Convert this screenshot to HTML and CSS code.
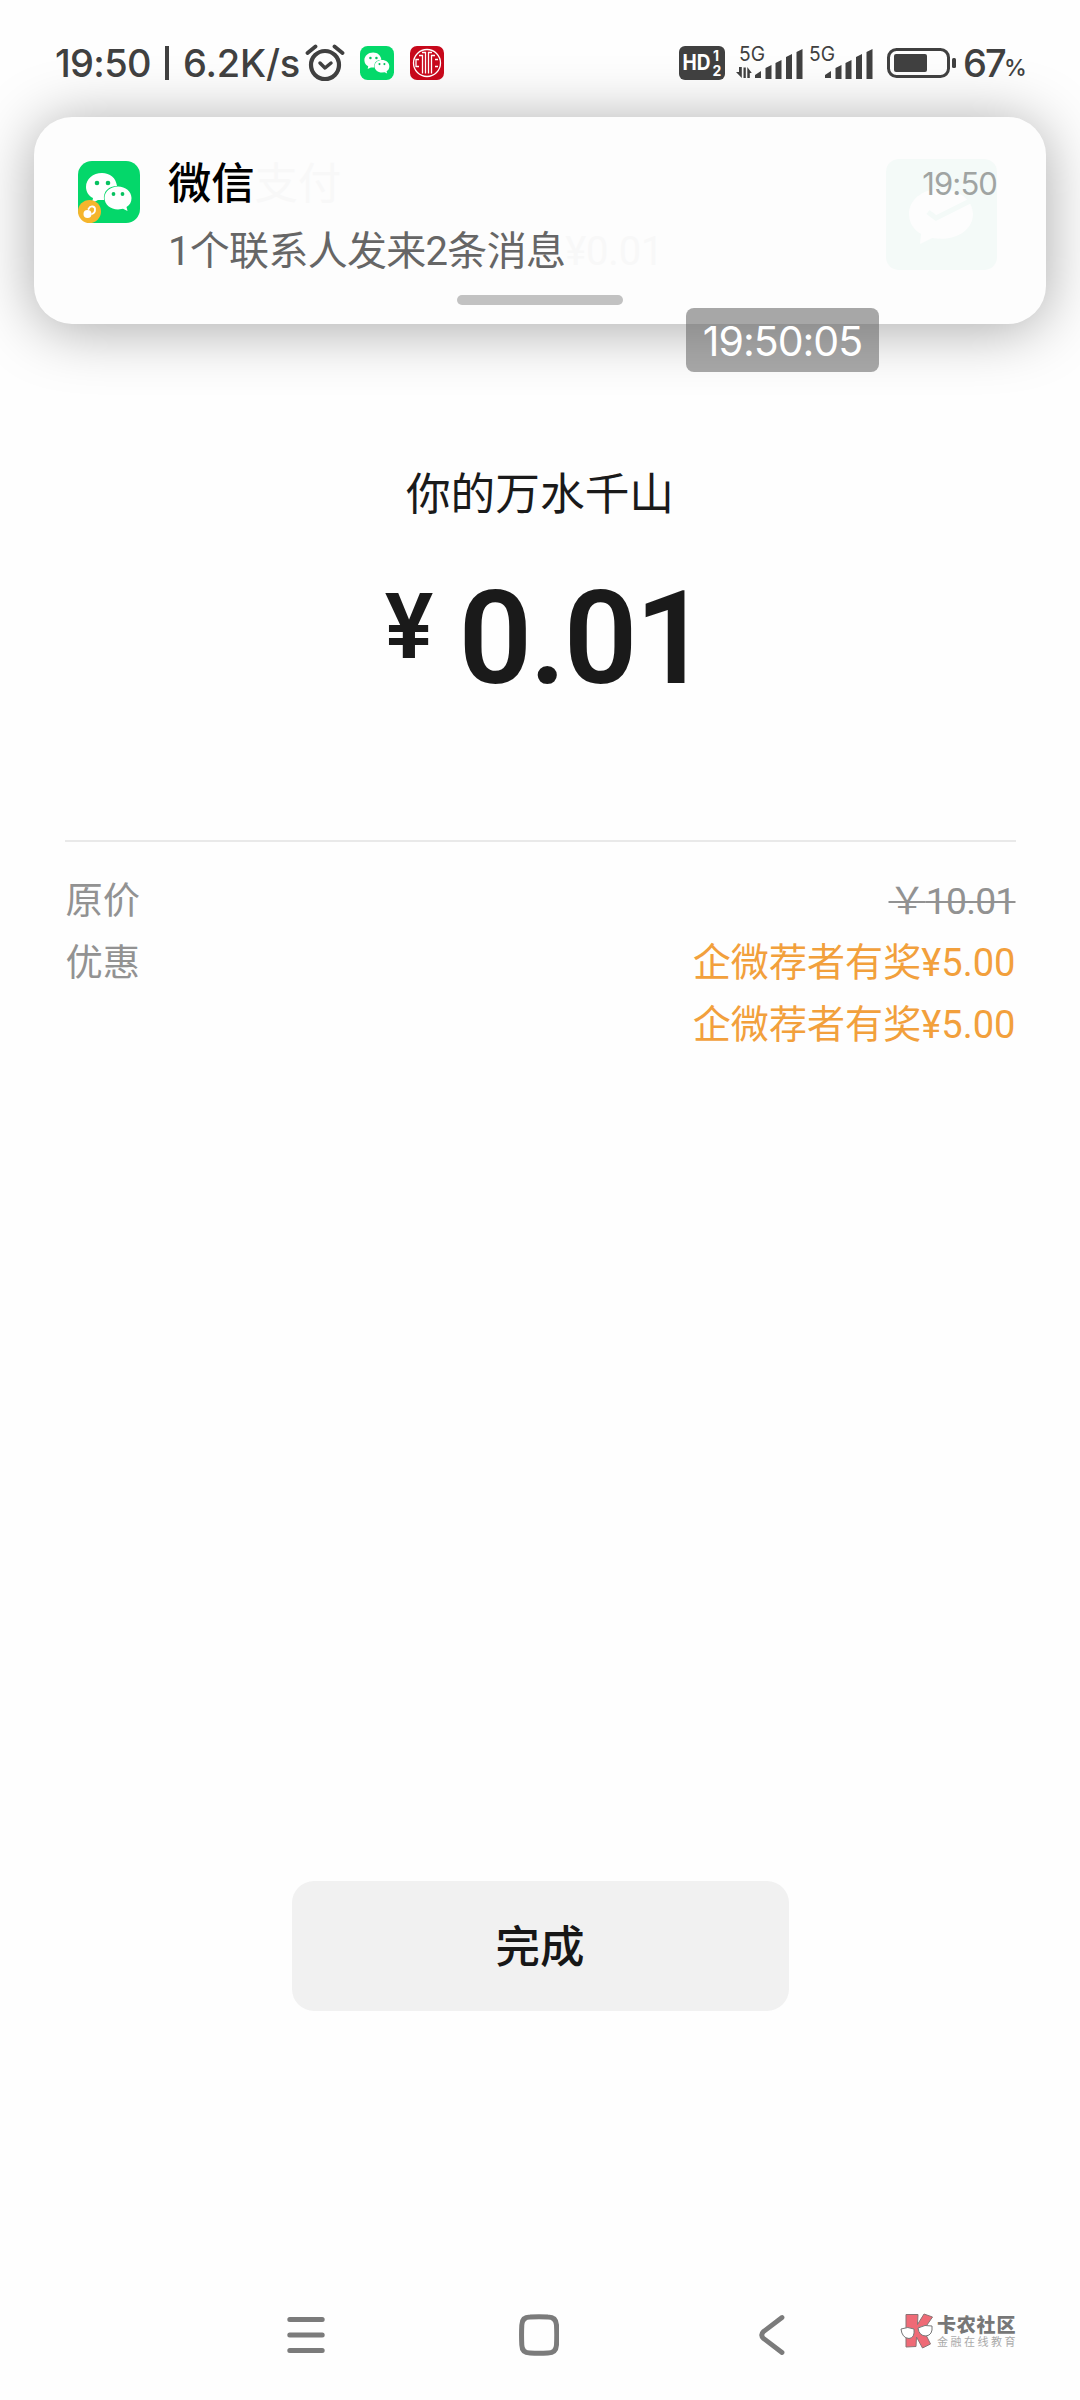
FILE: index.html
```html
<!DOCTYPE html>
<html lang="zh-CN">
<head>
<meta charset="utf-8">
<title>微信支付</title>
<link rel="stylesheet" href="styles.css">
</head>
<body>
<svg class="defs" aria-hidden="true">
  <symbol id="wechat" viewBox="0 0 62 62">
    <path fill="#fff" d="M24 12C15 12 8 18 8 26c0 5 3 9 7 11l-1 5 6-3h6c-1-9 5-14 13-14C38 17 32 12 24 12z"/>
    <path fill="#fff" d="M40 25.500c-7.500 0-13.500 5-13.500 11.500s6 11.500 13.500 11.500l5-.7 4.500 2.200-1-4C52 44 53.500 41 53.500 37c0-6.500-6-11.500-13.500-11.500z"/>
    <g fill="#07c160"><circle cx="19" cy="22" r="2.300"/><circle cx="30" cy="22" r="2.300"/><circle cx="35.500" cy="33" r="1.900"/><circle cx="44.500" cy="33" r="1.900"/></g>
  </symbol>
</svg>
<div class="screen">
  <header class="status">
    <span class="clock">19:50</span>
    <span class="bar"></span>
    <span class="speed">6.2K/s</span>
    <svg class="alarm" width="40" height="38" viewBox="0 0 40 38" fill="none" stroke="#404040">
      <circle cx="20" cy="21" r="14" stroke-width="4.200"/>
      <path d="M2.500 9l8-6.500M37.500 9l-8-6.500" stroke-width="3.800" stroke-linecap="round"/>
      <path d="M15 19l5 5 6-5" stroke-width="3.500" stroke-linecap="round" stroke-linejoin="round"/>
    </svg>
    <svg class="app-wechat" width="34" height="34" viewBox="0 0 62 62"><rect width="62" height="62" rx="14" fill="#04d96a"/><use href="#wechat"/></svg>
    <svg class="app-bank" width="34" height="34" viewBox="0 0 34 34">
      <rect width="34" height="34" rx="7" fill="#c7081b"/>
      <g fill="none" stroke="#fff" stroke-width="1.300">
        <circle cx="17" cy="17" r="13.500"/>
        <path d="M12 6.500h3.500v21M22 6.500h-3.500v21M9 9.500h3.500v18M25 9.500h-3.500v18M9 13.500H6v7h3M25 13.500h3M25 20.500h3"/>
      </g>
    </svg>
    <span class="spacer"></span>
    <svg class="hd" width="46" height="34" viewBox="0 0 46 34">
      <rect width="46" height="34" rx="6" fill="#404040"/>
      <text x="3.500" y="24" class="hd-text" textLength="28" lengthAdjust="spacingAndGlyphs">HD</text>
      <text x="34" y="15" class="hd-num">1</text><text x="33.500" y="30" class="hd-num">2</text>
    </svg>
    <svg class="signal-a" width="67" height="38" viewBox="0 -4 67 38" fill="#404040">
      <text x="3" y="15" class="net" textLength="26" lengthAdjust="spacingAndGlyphs">5G</text>
      <path d="M0 26h3v-5h2.800v11zM7.500 21.500V32H9.800V21.500zM11.300 32V21l4.500 6h-2v5z"/>
      <path d="M19 32v-3l6-4v7zM29.500 33V22l6-3V33zM39.500 33V17l6-3V33zM50 33V11l6-3V33zM60.500 33V6l6-3v30z"/>
    </svg>
    <svg class="signal-b" width="64" height="38" viewBox="3 -4 64 38" fill="#404040">
      <text x="3" y="15" class="net" textLength="26" lengthAdjust="spacingAndGlyphs">5G</text>
      <path d="M19 32v-3l6-4v7zM29.500 33V22l6-3V33zM39.500 33V17l6-3V33zM50 33V11l6-3V33zM60.500 33V6l6-3v30z"/>
    </svg>
    <svg class="battery" width="70" height="32" viewBox="0 0 70 32">
      <rect x="1.500" y="2.500" width="60" height="27" rx="8" fill="none" stroke="#404040" stroke-width="3"/>
      <rect x="7" y="7" width="33" height="18" rx="2" fill="#404040"/>
      <rect x="65" y="11" width="4" height="10" rx="1.500" fill="#404040"/>
    </svg>
    <span class="level">67</span><span class="percent">%</span>
  </header>

  <section class="notice">
    <svg class="notice-icon" width="62" height="62" viewBox="0 0 62 62">
      <rect width="62" height="62" rx="14" fill="#04d76a"/>
      <use href="#wechat"/>
      <circle cx="11.500" cy="50.500" r="11.500" fill="#f5b52c"/>
      <circle cx="9.500" cy="53" r="4" fill="#fff"/>
      <path d="M10.500 48c2-4 7-3 6.500 1 0 2-1.500 3.500-3 4" fill="none" stroke="#fff" stroke-width="1.800" stroke-linecap="round"/>
    </svg>
    <div class="notice-body">
      <div class="notice-title">微信<span class="ghost">支付</span></div>
      <div class="notice-text"><span>1个联系人发来2条消息</span><span class="ghost ghost-sum">¥0.01</span></div>
    </div>
    <div class="notice-side">
      <svg class="ghost-logo" width="111" height="111" viewBox="0 0 111 111">
        <rect width="111" height="111" rx="13" fill="#f4faf8"/>
        <path fill="#fdfdfd" d="M54 30c-18 0-31 11-31 25 0 9 5 16 12 20l-1 10 12-6c24 4 41-8 41-24 0-14-14-25-33-25z"/>
        <path d="M42 53l8 6 34-17" fill="none" stroke="#f4faf8" stroke-width="5"/>
      </svg>
      <time class="notice-time">19:50</time>
    </div>
    <span class="handle"></span>
  </section>
  <div class="stamp">19:50:05</div>

  <main class="receipt">
    <h1 class="payee">你的万水千山</h1>
    <div class="amount"><span class="yen">¥</span><span class="sum">0.01</span></div>
    <dl class="details">
      <div class="row"><dt>原价</dt><dd class="old">&#xFFE5;<span>10.01</span></dd></div>
      <div class="row"><dt>优惠</dt><dd class="promo">企微荐者有奖<span>¥5.00</span></dd></div>
      <div class="row"><dt></dt><dd class="promo">企微荐者有奖<span>¥5.00</span></dd></div>
    </dl>
    <button class="done">完成</button>
  </main>

  <footer class="nav">
    <svg class="nav-menu" width="38" height="42" viewBox="0 0 38 42" fill="none" stroke="#7b7b7b" stroke-width="5" stroke-linecap="round"><path d="M2.800 5.500h32.400M2.800 21h32.400M2.800 36.500h32.400"/></svg>
    <svg class="nav-home" width="40" height="42" viewBox="0 0 40 42" fill="none" stroke="#7b7b7b" stroke-width="5"><path d="M11 3Q20 2.500 29 3Q37 3 37.500 11Q38 21 37.500 31Q37 39 29 39Q20 39.500 11 39Q3 39 2.800 31Q2.300 21 2.800 11Q3 3 11 3z"/></svg>
    <svg class="nav-back" width="26" height="42" viewBox="0 0 26 42" fill="none" stroke="#7b7b7b" stroke-width="4.800" stroke-linecap="round"><path d="M23 3.500L4.500 17.500Q1 21 4.500 24.500L23 38.500"/></svg>
    <svg class="mark" width="34" height="36" viewBox="0 0 34 36">
      <path d="M6 1.500h12l-.5 10L24 1l8.500 3-9 13 7 14-8 4-6-11-.5 9.500-10 .5z" fill="#ef6a76" stroke="#8b7375"/>
      <path d="M1 16q7-3 13 0 1 9-5 9.500Q2 25 1 16zM18 15q7-4 14-2 1 9-6 10-7 0-8-8z" fill="#fff" stroke="#777"/>
    </svg>
    <div class="brand"><div class="brand-name">卡农社区</div><div class="brand-sub">金融在线教育</div></div>
  </footer>
</div>
</body>
</html>
```
FILE: styles.css
```css
* { box-sizing: border-box; }
body { margin: 0; background: #fefefe; font-family: Roboto, "Noto Sans CJK SC", sans-serif; }
.defs { position: absolute; width: 0; height: 0; }
.screen { position: relative; width: 1080px; height: 2400px; display: flex; flex-direction: column; overflow: hidden; background: #fefefe; }
svg { display: block; flex: none; }

.status { position: relative; z-index: 2; height: 117px; padding: 44px 0 0 55px; display: flex; align-items: flex-start; color: #404040; white-space: nowrap; }
.status > span { height: 38px; line-height: 38px; }
.clock, .speed, .level, .percent { font-family: Inter, Roboto, sans-serif; font-weight: 500; }
.clock { width: 110px; font-size: 38px; letter-spacing: -.7px; }
.status .bar { width: 4px; height: 34px; background: #404040; margin-top: 2px; }
.speed { width: 121px; margin-left: 14px; font-size: 38px; letter-spacing: -.2px; }
.alarm { margin-left: 1px; }
.app-wechat { margin: 2px 0 0 15px; }
.app-bank { margin: 2px 0 0 16px; }
.spacer { flex: 1; }
.hd { margin: 2px 0 0; }
.hd-text { font: 700 21px Inter, sans-serif; fill: #fff; }
.hd-num { font: 700 14px Inter, sans-serif; fill: #fff; }
.net { font: 400 20px Inter, sans-serif; }
.signal-a, .signal-b { overflow: visible; }
.signal-a { margin: -2px 0 0 11px; }
.signal-b { margin: -2px 0 0 6px; }
.battery { margin: 3px 0 0 14px; }
.level { width: 41px; margin-left: 6px; font-size: 38px; letter-spacing: -2px; }
.percent { width: 76px; padding-top: 5px; font-size: 23px; }

.notice { position: relative; z-index: 1; height: 207px; margin: 0 34px; padding: 44px 49px 0 44px; display: flex; align-items: flex-start; background: #fdfdfd; border-radius: 38px; box-shadow: 0 5px 60px rgba(0, 0, 0, .34); }
.notice-body { flex: 1; margin-left: 28px; white-space: nowrap; }
.notice-title { margin-top: -6px; height: 60px; line-height: 60px; font-size: 43.300px; font-weight: 500; color: #000; }
.notice-text { margin-top: 7px; height: 60px; line-height: 60px; font-size: 40px; color: #666; letter-spacing: -.7px; }
.ghost { color: #f8f8f8; font-weight: 400; }
.ghost-sum { letter-spacing: -.2px; }
.notice-side { display: grid; justify-items: end; margin: -2px 0 0 0; }
.ghost-logo, .notice-time { grid-area: 1 / 1; }
.notice-time { padding: 5px 0 0; font: 400 31px/40px Inter, sans-serif; letter-spacing: -.9px; color: #a0a4a2; }
.handle { position: absolute; left: 423px; bottom: 19px; width: 166px; height: 10px; border-radius: 5px; background: #c2c2c2; }
.stamp { position: absolute; z-index: 3; left: 686px; top: 308px; width: 193px; height: 64px; border-radius: 8px; background: rgba(100, 100, 100, .56); color: #fff; font: 400 41px/66px Inter, sans-serif; letter-spacing: -1px; text-align: center; }

.receipt { flex: 1; display: flex; flex-direction: column; align-items: center; }
.payee { margin: 139px 0 0; height: 64px; line-height: 64px; font-size: 44.700px; font-weight: 400; color: #1a1a1a; }
.amount { height: 150px; margin: 37px 0 0 11px; display: flex; align-items: flex-start; color: #1a1a1a; font-weight: 600; line-height: 150px; }
.yen { font-size: 91px; line-height: 126px; }
.sum { margin-left: 25px; font-size: 129px; letter-spacing: -2.500px; }
.details { width: 951px; margin: 126px 0 0; padding-top: 28px; border-top: 2px solid #e9e9e9; }
.row { height: 62px; display: flex; justify-content: space-between; line-height: 62px; font-size: 37.300px; color: #929292; }
dt { padding-left: 1px; }
dd { margin: 0; }
.old { text-decoration: line-through; text-decoration-thickness: 2px; }
.old span { letter-spacing: -.8px; }
.promo { color: #f2a03c; font-size: 38.100px; }
.done { width: 497px; height: 130px; margin-top: 825px; padding: 0 0 5px; border: 0; border-radius: 22px; background: #f1f1f1; color: #171717; font: 500 44.500px "Noto Sans CJK SC", sans-serif; }

.nav { height: 90px; display: flex; align-items: flex-start; padding: 4px 0 0 287px; }
.nav-home { margin-left: 194px; }
.nav-back { margin-left: 200px; }
.mark { margin: -1px 0 0 115px; }
.brand { margin: -1px 0 0 3px; white-space: nowrap; }
.brand-name { height: 21px; font: 900 19px/21px "Noto Sans CJK SC", sans-serif; letter-spacing: .8px; color: #777; }
.brand-sub { font: 400 11px/14px "Noto Sans CJK SC", sans-serif; letter-spacing: 2.500px; color: #aaa; }
```
